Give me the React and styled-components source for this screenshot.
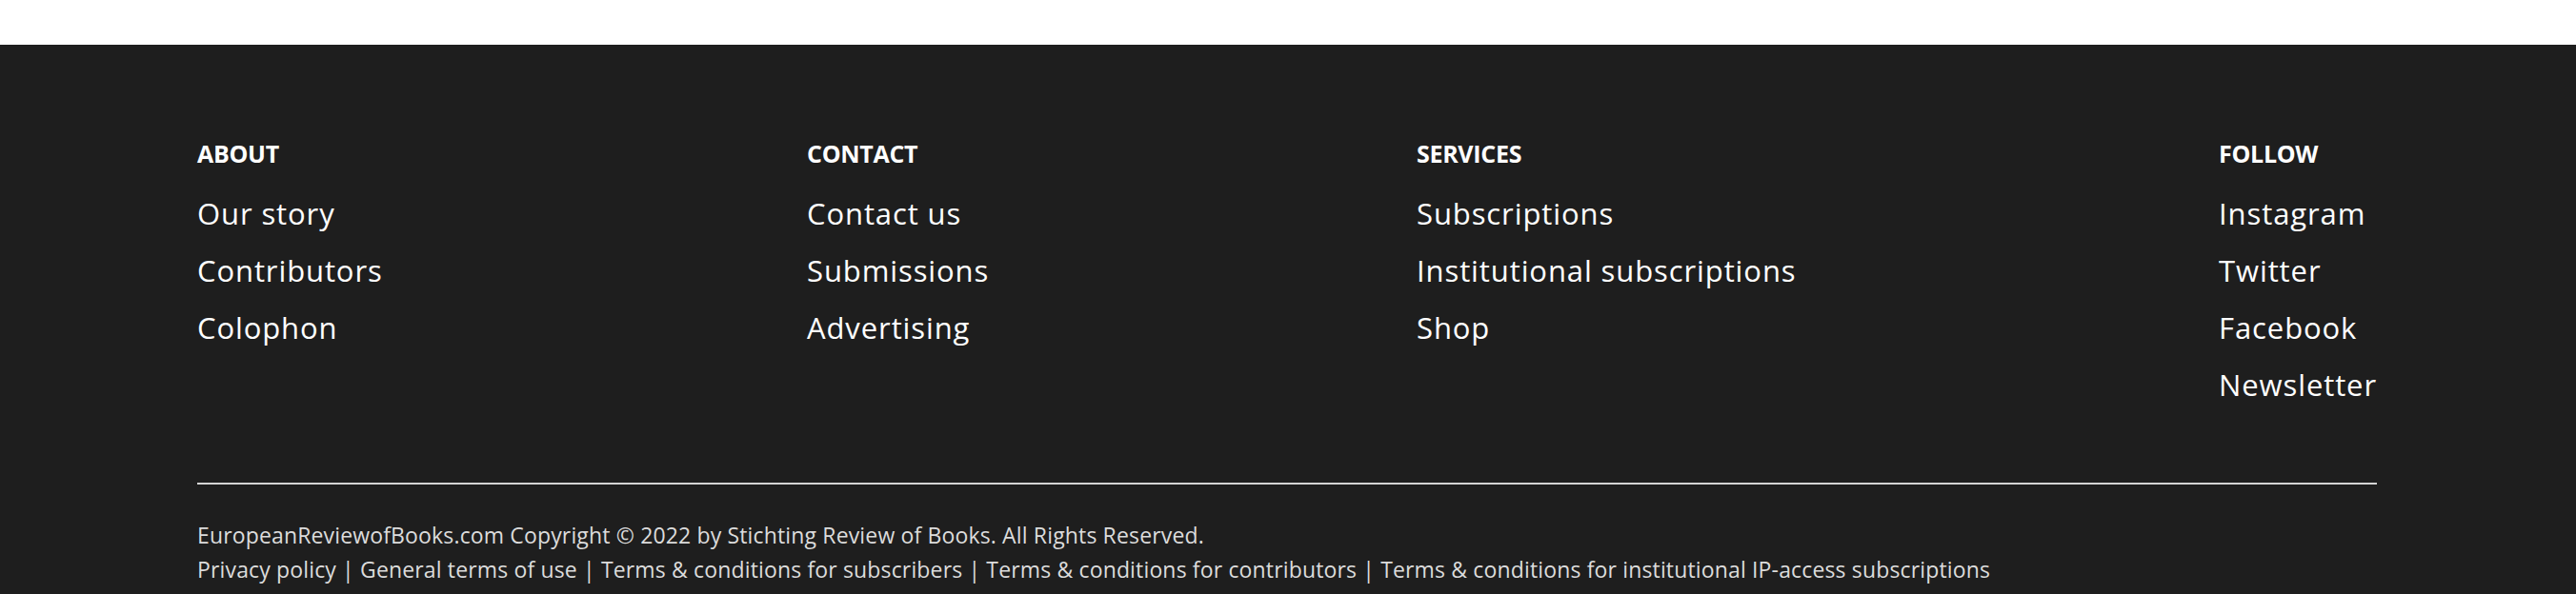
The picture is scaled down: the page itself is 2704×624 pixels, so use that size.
import styled, { createGlobalStyle } from "styled-components"

const GlobalStyle = createGlobalStyle`
  body {
    margin: 0;
    background: #ffffff;
    font-family: "Open Sans", "Liberation Sans", sans-serif;
  }
`

const Page = styled.div`
  padding-top: 47px;
`

const Footer = styled.footer`
  background: #1e1e1e;
  color: #ffffff;
  padding: 100px 209px 12px 207px;
`

const Columns = styled.div`
  display: grid;
  grid-template-columns: 640px 640px 1fr auto;
`

const Column = styled.div`
  display: flex;
  flex-direction: column;
`

const Heading = styled.h4`
  margin: 0 0 19px;
  font-size: 25px;
  line-height: 28px;
  font-weight: 700;
  letter-spacing: -0.3px;
  text-transform: uppercase;
`

const FooterLink = styled.a`
  color: #ffffff;
  text-decoration: none;
  font-size: 31px;
  line-height: 60px;
  letter-spacing: 0.9px;
  white-space: nowrap;
`

const Divider = styled.hr`
  margin: 73px 0 0;
  border: none;
  height: 2px;
  background: #d4d4d4;
`

const Legal = styled.div`
  margin-top: 35px;
  color: #dcdcdc;
  font-size: 23px;
  line-height: 36px;
  letter-spacing: 0.15px;
`

const sections = [
  { title: "About", links: ["Our story", "Contributors", "Colophon"] },
  { title: "Contact", links: ["Contact us", "Submissions", "Advertising"] },
  { title: "Services", links: ["Subscriptions", "Institutional subscriptions", "Shop"] },
  { title: "Follow", links: ["Instagram", "Twitter", "Facebook", "Newsletter"] },
]

const legalLinks = [
  "Privacy policy",
  "General terms of use",
  "Terms & conditions for subscribers",
  "Terms & conditions for contributors",
  "Terms & conditions for institutional IP-access subscriptions",
]

export default function App() {
  return (
    <Page>
      <GlobalStyle />
      <Footer>
        <Columns>
          {sections.map((section) => (
            <Column key={section.title}>
              <Heading>{section.title}</Heading>
              {section.links.map((link) => (
                <FooterLink key={link} href="#">
                  {link}
                </FooterLink>
              ))}
            </Column>
          ))}
        </Columns>
        <Divider />
        <Legal>
          <div>
            EuropeanReviewofBooks.com Copyright © 2022 by Stichting Review of Books. All Rights Reserved.
          </div>
          <div>{legalLinks.join(" | ")}</div>
        </Legal>
      </Footer>
    </Page>
  )
}
